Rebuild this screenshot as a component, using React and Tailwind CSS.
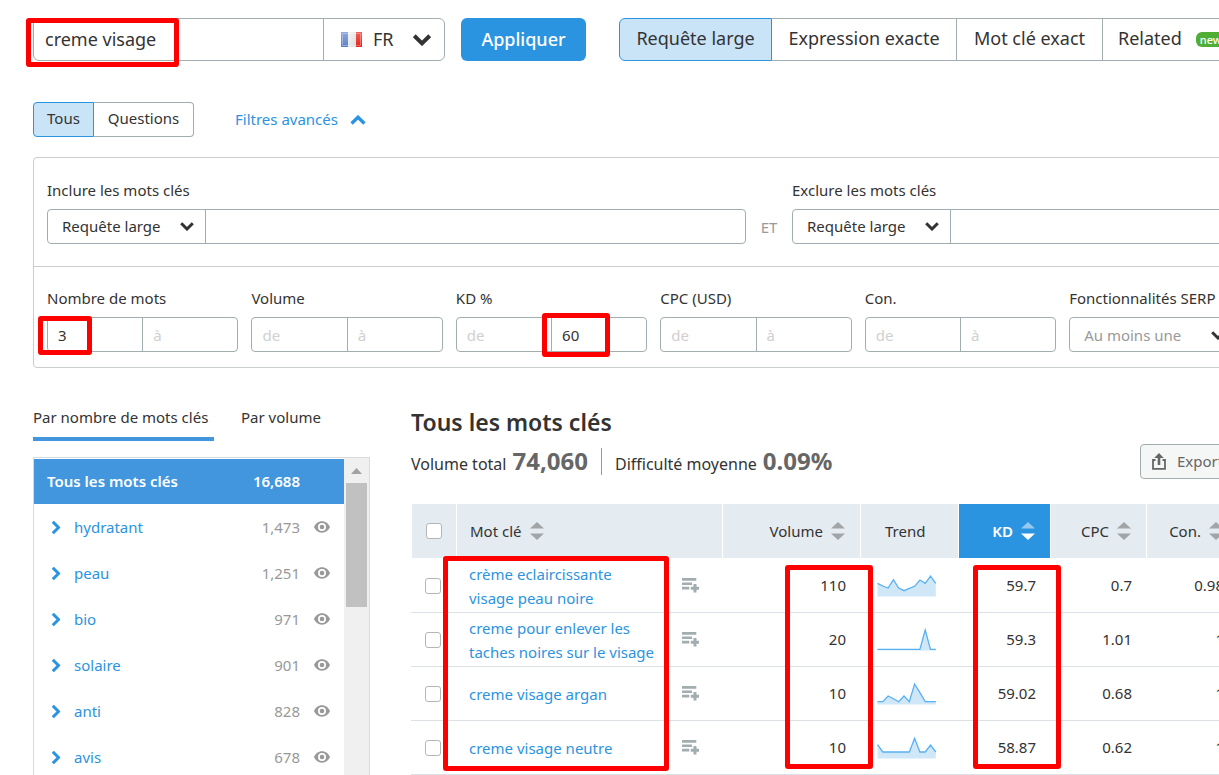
import React from "react";

const keywordGroups = [
  ["hydratant", "1,473"],
  ["peau", "1,251"],
  ["bio", "971"],
  ["solaire", "901"],
  ["anti", "828"],
  ["avis", "678"],
];

const keywords = [
  { name: "crème eclaircissante visage peau noire", volume: "110", kd: "59.7", cpc: "0.7", con: "0.98", trend: [9.3, 12, 14, 5.7, 14, 16.7, 14.3, 12.3, 6, 9.3, 2, 9.3] },
  { name: "creme pour enlever les taches noires sur le visage", volume: "20", kd: "59.3", cpc: "1.01", con: "1", trend: [21.3, 21.3, 21.3, 21.3, 21.3, 21.3, 21.3, 21.3, 21.3, 2, 21.3, 21.3] },
  { name: "creme visage argan", volume: "10", kd: "59.02", cpc: "0.68", con: "1", trend: [19.7, 19.7, 14, 16.7, 19.7, 14, 19.7, 2, 10.7, 19.7, 19.7, 19.7] },
  { name: "creme visage neutre", volume: "10", kd: "58.87", cpc: "0.62", con: "1", trend: [8.7, 16, 16, 16, 16, 16, 16, 2.3, 16, 16, 9, 16] },
];

function Highlight({ className }) {
  return <div aria-hidden="true" className={`pointer-events-none absolute z-10 rounded-[3px] border-5 border-[#ff0000] ${className}`} />;
}

function Chevron({ className }) {
  return (
    <svg viewBox="0 0 14 9" fill="none" stroke="currentColor" strokeWidth="3" className={className} aria-hidden="true">
      <path d="M1.2 1.3 7 7l5.8-5.7" />
    </svg>
  );
}

function SortIcon({ active }) {
  return (
    <svg viewBox="0 0 14 18" className="h-[18px] w-[14px] shrink-0" aria-hidden="true">
      <path d="M0 6.500 7 0l7 6.500z" fill={active ? "#95c9ef" : "#a2a5a8"} />
      <path d="M0 11.500h14l-7 6.500z" fill={active ? "#ffffff" : "#a2a5a8"} />
    </svg>
  );
}

function EyeIcon() {
  return (
    <svg viewBox="0 0 16 12" className="h-3 w-4" aria-hidden="true">
      <path fillRule="evenodd" fill="#999999" d="M8 .3C4.300.300 1.400 2.600 0 6c1.400 3.400 4.300 5.700 8 5.700s6.600-2.300 8-5.700C14.600 2.600 11.700.300 8 .300zM8 10a4 4 0 1 1 0-8 4 4 0 0 1 0 8z" />
      <circle cx="8" cy="6" r="2.300" fill="#999999" />
    </svg>
  );
}

function AddToListIcon() {
  return (
    <svg viewBox="0 0 17 15" className="h-[15px] w-[17px]" fill="#a2adb0" aria-hidden="true">
      <path d="M0 0h14.300v2.700H0zM0 4.400h10v2.600H0zM0 8.800h7.300v2.700H0zM11.500 6h3v2.800H17v2.900h-2.500v2.800h-3v-2.800H8.800V8.800h2.700z" />
    </svg>
  );
}

function ExportIcon() {
  return (
    <svg viewBox="0 0 14 17" className="h-[17px] w-[14px]" aria-hidden="true">
      <path d="M3.500 7H1v8.800h12V7h-2.500" fill="none" stroke="#666" strokeWidth="1.800" />
      <path d="M7 0l4.800 5H8.300v7H5.700V5H2.200z" fill="#666" />
    </svg>
  );
}

function FlagFrance() {
  return (
    <svg viewBox="0 0 21 15" className="h-[15px] w-[21px]" aria-hidden="true">
      <defs>
        <linearGradient id="blueBand" x1="0" x2="0" y1="0" y2="1">
          <stop offset="0" stopColor="#8fa9e0" />
          <stop offset="1" stopColor="#5c80cc" />
        </linearGradient>
        <linearGradient id="whiteBand" x1="0" x2="1" y1="0" y2="1">
          <stop offset="0" stopColor="#f6f6f6" />
          <stop offset="1" stopColor="#dcdcdc" />
        </linearGradient>
        <linearGradient id="redBand" x1="0" x2="0" y1="0" y2="1">
          <stop offset="0" stopColor="#f0625a" />
          <stop offset="1" stopColor="#e2231a" />
        </linearGradient>
      </defs>
      <path d="M0 0h7v15H0z" fill="url(#blueBand)" />
      <path d="M7 0h8v15H7z" fill="url(#whiteBand)" />
      <path d="M15 0h6v15h-6z" fill="url(#redBand)" />
      <path d="M1.500 1.500h18v12h-18z" fill="none" stroke="#fff" strokeOpacity=".3" />
    </svg>
  );
}

function Sparkline({ values }) {
  const points = values.map((y, i) => `${(0.5 + i * 5.3).toFixed(1)},${y}`).join(" ");
  return (
    <svg viewBox="0 0 60 24" className="block h-6 w-[60px]" aria-hidden="true">
      <polygon points={`0.5,22.500 ${points} 58.800,22.500`} fill="#d0e7f8" />
      <polyline points={points} fill="none" stroke="#57b1f3" strokeWidth="1.300" />
    </svg>
  );
}

function RangeField({ id, label, from = "", to = "", children }) {
  const field = "min-w-0 flex-1 px-[10px] pt-px text-[#333] outline-none placeholder:text-[#d0d0d0]";
  return (
    <fieldset className="min-w-0">
      <legend className="mb-2 h-[22px] leading-[22px]">{label}</legend>
      <div className="relative flex h-[35px] rounded border border-[#a2adb0]">
        <input id={`${id}-from`} aria-label={`${label} de`} placeholder="de" defaultValue={from} className={field} />
        <input id={`${id}-to`} aria-label={`${label} à`} placeholder="à" defaultValue={to} className={`${field} border-l border-[#a2adb0]`} />
        {children}
      </div>
    </fieldset>
  );
}

function KeywordFilter({ id, label }) {
  return (
    <div className="min-w-0 flex-1">
      <label htmlFor={id} className="mb-2 block h-[22px] leading-[22px]">{label}</label>
      <div className="flex h-[35px] rounded border border-[#a2adb0]">
        <div className="relative w-[158px] border-r border-[#a2adb0]">
          <select aria-label={`${label} : type`} className="h-full w-full appearance-none bg-transparent pl-[14px] outline-none">
            <option>Requête large</option>
          </select>
          <Chevron className="pointer-events-none absolute top-3 right-[11px] h-[9px] w-[14px]" />
        </div>
        <input id={id} className="min-w-0 flex-1 px-3 outline-none" />
      </div>
    </div>
  );
}

function Checkbox({ label }) {
  return <input type="checkbox" aria-label={label} className="block size-4 appearance-none rounded-[3px] border border-[#b5b5b5] bg-white checked:bg-[#2b94e1]" />;
}

function HeaderCell({ children, active, align = "justify-end", sortable = true }) {
  return (
    <th className={`border-l border-white p-0 font-normal ${active ? "bg-[#2b94e1] text-white" : "bg-[#e4ebf1]"}`}>
      <div className={`flex items-center gap-2 ${align} ${active ? "font-semibold" : ""}`}>
        {children}
        {sortable && <SortIcon active={active} />}
      </div>
    </th>
  );
}

export default function App() {
  return (
    <div className="h-screen overflow-hidden bg-white font-['Noto_Sans','Open_Sans',sans-serif] text-[15px] text-[#333]">
      <main className="flex h-full min-w-[1538px] flex-col px-[33px] pt-[18px]">
        <div className="flex h-[43px] shrink-0 text-lg">
          <form className="relative flex w-[412px] rounded-md border border-[#a2adb0]">
            <input aria-label="Mot clé" defaultValue="creme visage" className="min-w-0 flex-1 px-[11px] pb-px outline-none" />
            <div className="relative w-[121px] border-l border-[#a2adb0]">
              <div className="pointer-events-none absolute top-[13px] left-[17px]"><FlagFrance /></div>
              <select aria-label="Pays" className="h-full w-full appearance-none bg-transparent pb-px pl-[49px] outline-none">
                <option>FR</option>
              </select>
              <Chevron className="pointer-events-none absolute top-[15px] right-3 h-3 w-[20px]" />
            </div>
            <Highlight className="-top-px -left-2 h-[49px] w-[153px]" />
          </form>
          <button className="ml-4 w-[125px] rounded-md bg-[#2b94e1] pb-px font-medium text-white">Appliquer</button>
          <div className="ml-[33px] flex">
            <button className="w-[153px] rounded-l-md border border-[#2b94e1] bg-[#c9e4f7] pb-1">Requête large</button>
            <button className="w-[184px] border-y border-[#a2adb0] pb-1">Expression exacte</button>
            <button className="w-[147px] border border-[#a2adb0] pb-1">Mot clé exact</button>
            <button className="flex w-[150px] items-center gap-[14px] rounded-r-md border border-l-0 border-[#a2adb0] pb-1 pl-[15px]">
              Related
              <span className="mt-1 rounded-md bg-[#4fae33] px-1 text-[11px] leading-[15px] font-medium text-white">new</span>
            </button>
          </div>
        </div>

        <div className="mt-[41px] flex h-[35px] shrink-0">
          <button className="w-[61px] rounded-l border border-[#2b94e1] bg-[#c9e4f7] pb-[2px]">Tous</button>
          <button className="w-[100px] rounded-r border border-l-0 border-[#a2adb0] pb-[2px]">Questions</button>
          <button className="ml-[41px] flex items-center gap-3 text-[#2b94e1]">
            Filtres avancés
            <Chevron className="h-[10px] w-[16px] rotate-180" />
          </button>
        </div>

        <section className="mt-5 shrink-0 rounded border border-[#c9cdcf]">
          <div className="flex items-end border-b border-[#c9cdcf] px-[13px] pt-[21px] pb-[22px]">
            <KeywordFilter id="include" label="Inclure les mots clés" />
            <span className="w-[46px] pb-[6px] text-center text-[#999]">ET</span>
            <KeywordFilter id="exclude" label="Exclure les mots clés" />
          </div>
          <div className="pr-[39px] pb-[15px] pl-[13px]">
            <div className="grid grid-cols-7 gap-[13px] pt-5">
              <RangeField id="words" label="Nombre de mots" from="3">
                <Highlight className="-top-[2px] -left-[10px] h-[39px] w-[54px]" />
              </RangeField>
              <RangeField id="volume" label="Volume" />
              <RangeField id="kd" label="KD %" to="60">
                <Highlight className="-top-[5px] left-[85px] h-[44px] w-[68px]" />
              </RangeField>
              <RangeField id="cpc" label="CPC (USD)" />
              <RangeField id="con" label="Con." />
              <div className="min-w-0">
                <label htmlFor="serp" className="mb-2 block h-[22px] leading-[22px] whitespace-nowrap">Fonctionnalités SERP</label>
                <div className="relative h-[35px] w-[166px] rounded border border-[#a2adb0]">
                  <select id="serp" className="h-full w-full appearance-none bg-transparent pt-px pl-[14px] text-[#999] outline-none">
                    <option>Au moins une</option>
                  </select>
                  <Chevron className="pointer-events-none absolute top-[13px] right-[9px] h-[9px] w-[14px]" />
                </div>
              </div>
            </div>
          </div>
        </section>

        <div className="flex min-h-0 flex-1 pt-[38px]">
          <aside className="flex w-[337px] shrink-0 flex-col">
            <div className="flex h-[35px] shrink-0 gap-[27px]">
              <button className="w-[181px] border-b-4 border-[#4196de] pb-[8px] text-left whitespace-nowrap">Par nombre de mots clés</button>
              <button className="border-b-4 border-transparent pb-[8px]">Par volume</button>
            </div>
            <div className="mt-4 flex min-h-0 flex-1 border border-b-0 border-[#d9dbdc]">
              <ul className="flex-1 overflow-hidden pt-px">
                <li className="flex h-[45px] items-center bg-[#4196de] pr-11 pl-[13px] font-semibold text-white">
                  <span className="flex-1">Tous les mots clés</span>
                  <span>16,688</span>
                </li>
                {keywordGroups.map(([name, count]) => (
                  <li key={name} className="flex h-[46px] items-center pr-[14px] pl-[15px] text-[#999]">
                    <button aria-label={`Ouvrir ${name}`} className="w-[25px] text-[#2b94e1]">
                      <Chevron className="h-[9px] w-[14px] -rotate-90" />
                    </button>
                    <a href="#" className="flex-1 text-[#2b94e1]">{name}</a>
                    <span>{count}</span>
                    <button aria-label={`Masquer ${name}`} className="ml-[14px]"><EyeIcon /></button>
                  </li>
                ))}
              </ul>
              <div className="w-[25px] bg-[#f0f0f0] px-[2px] pt-[10px]" aria-hidden="true">
                <svg viewBox="0 0 11 6" className="mx-auto h-[6px] w-[11px]"><path d="M0 6 5.500 0 11 6z" fill="#a2a2a2" /></svg>
                <div className="mt-[9px] h-[124px] bg-[#c1c1c1]" />
              </div>
            </div>
          </aside>

          <section className="ml-[41px] min-w-0 flex-1">
            <h1 className="text-[23px] leading-[32px] font-semibold">Tous les mots clés</h1>
            <div className="mt-[6px] flex h-[35px] items-center">
              <p className="flex items-baseline gap-[6px] pb-[2px] text-base">
                Volume total <strong className="text-2xl leading-[35px] font-bold text-[#666]">74,060</strong>
              </p>
              <div className="mx-[13px] h-[27px] w-px bg-[#999]" />
              <p className="flex items-baseline gap-[6px] pb-[2px] text-base">
                Difficulté moyenne <strong className="text-2xl leading-[35px] font-bold text-[#666]">0.09%</strong>
              </p>
              <button className="ml-auto flex h-[35px] w-[365px] items-center gap-[11px] rounded border border-[#a2adb0] bg-[#f5f7f7] pl-[11px] text-[#666]">
                <ExportIcon /> Exporter
              </button>
            </div>
            <div className="relative mt-[25px]">
              <table className="w-full table-fixed border-separate border-spacing-0">
                <colgroup>
                  <col className="w-[45px]" />
                  <col className="w-[226px]" />
                  <col className="w-[40px]" />
                  <col className="w-[138px]" />
                  <col className="w-[98px]" />
                  <col className="w-[92px]" />
                  <col className="w-[96px]" />
                  <col className="w-[92px]" />
                  <col />
                </colgroup>
                <thead>
                  <tr className="h-[54px] [&>th]:pr-[15px]">
                    <th className="border-l border-white bg-[#e4ebf1] p-0 pl-[14px]"><Checkbox label="Tout sélectionner" /></th>
                    <th colSpan={2} className="border-l border-white bg-[#e4ebf1] p-0 font-normal">
                      <div className="flex items-center gap-2 pl-[13px]">Mot clé <SortIcon /></div>
                    </th>
                    <HeaderCell>Volume</HeaderCell>
                    <HeaderCell align="pl-6" sortable={false}>Trend</HeaderCell>
                    <HeaderCell active>KD</HeaderCell>
                    <HeaderCell>CPC</HeaderCell>
                    <HeaderCell>Con.</HeaderCell>
                    <td className="border-l border-white bg-[#e4ebf1]" />
                  </tr>
                </thead>
                <tbody>
                  {keywords.map((row) => (
                    <tr key={row.name} className="h-[54px] text-right last:h-[55px] [&>td]:border-t [&>td]:border-[#dbe1e4] first:[&>td]:border-white last:[&>td]:border-b">
                      <td className="p-0 pl-[14px]"><Checkbox label={row.name} /></td>
                      <td className="p-0 pl-[13px] text-left leading-6">
                        <a href="#" className="block w-[188px] text-[#2b94e1]">{row.name}</a>
                      </td>
                      <td className="p-0">
                        <button aria-label="Ajouter à la liste" className="block w-[17px]"><AddToListIcon /></button>
                      </td>
                      <td className="p-0 pr-[14px]">{row.volume}</td>
                      <td className="p-0 pl-[17px]"><Sparkline values={row.trend} /></td>
                      <td className="p-0 pr-[14px]">{row.kd}</td>
                      <td className="p-0 pr-[14px]">{row.cpc}</td>
                      <td className="p-0 pr-[14px]">{row.con}</td>
                      <td />
                    </tr>
                  ))}
                </tbody>
              </table>
              <Highlight className="top-[52px] left-8 h-[215px] w-[226px]" />
              <Highlight className="top-[61px] left-[374px] h-[204px] w-[88px]" />
              <Highlight className="top-[61px] left-[562px] h-[204px] w-[88px]" />
            </div>
          </section>
        </div>
      </main>
    </div>
  );
}
